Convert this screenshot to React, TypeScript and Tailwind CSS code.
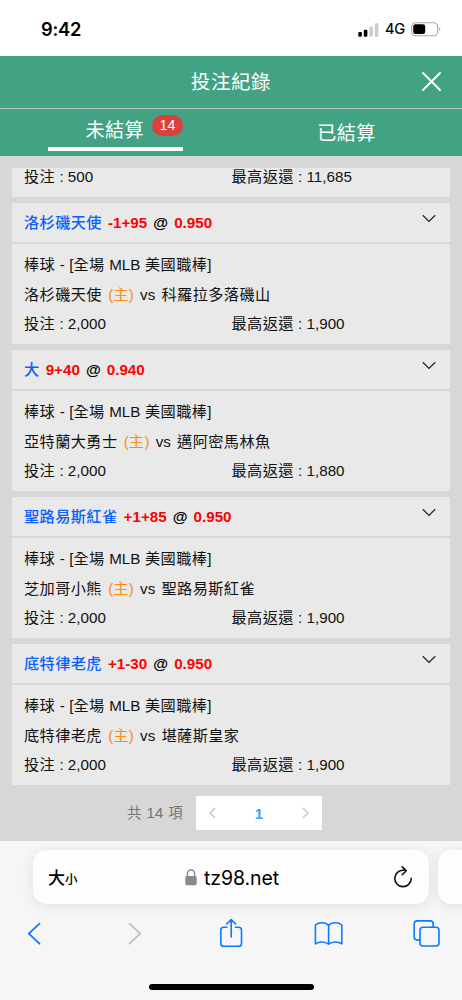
import React from "react";

type Bet = { pick: string; line: string; odds: string; home: string; away: string; win: string };

const bets: Bet[] = [
  { pick: "洛杉磯天使", line: "-1+95", odds: "0.950", home: "洛杉磯天使", away: "科羅拉多落磯山", win: "1,900" },
  { pick: "大", line: "9+40", odds: "0.940", home: "亞特蘭大勇士", away: "邁阿密馬林魚", win: "1,880" },
  { pick: "聖路易斯紅雀", line: "+1+85", odds: "0.950", home: "芝加哥小熊", away: "聖路易斯紅雀", win: "1,900" },
  { pick: "底特律老虎", line: "+1-30", odds: "0.950", home: "底特律老虎", away: "堪薩斯皇家", win: "1,900" },
];

const Han = ({ children }: { children: React.ReactNode }) => (
  <span className="tracking-[0.4px]">{children}</span>
);

function Amounts({ stake, win }: { stake: string; win: string }) {
  return (
    <div className="flex h-[29.6px] items-center">
      <div className="w-[207.5px]"><Han>投注</Han> : {stake}</div>
      <div><Han>最高返還</Han> : {win}</div>
    </div>
  );
}

function BetCard({ bet }: { bet: Bet }) {
  return (
    <section className="mb-[6px] flex h-[141px] flex-col bg-[#e9e9e9]">
      <div className="flex h-[41px] justify-between border-b-2 border-[#d7d7d7] pl-3 pr-[14px]">
        <div className="flex h-[40px] items-center whitespace-pre font-bold text-[#ff0000] [word-spacing:1.8px]">
          <span className="font-medium tracking-[0.4px] text-[#0a60ff]">{bet.pick}</span>
          <span> {bet.line} </span>
          <span className="text-black">@</span>
          <span> {bet.odds}</span>
        </div>
        <svg className="mt-[11px] h-[9px] w-[14px]" viewBox="0 0 14 9" fill="none" stroke="#222" strokeWidth="1.2">
          <path d="M.8 1.3 7 7.4l6.2-6.1" />
        </svg>
      </div>
      <div className="whitespace-pre pl-3 pt-[6px] text-[#111]">
        <div className="flex h-[29.6px] items-center [word-spacing:0.3px]">
          <Han>棒球</Han> - [<Han>全場</Han> MLB <Han>美國職棒</Han>]
        </div>
        <div className="flex h-[29.6px] items-center [word-spacing:2px]">
          <Han>{bet.home}</Han>
          <span className="text-[#ff8c0a]"> (<Han>主</Han>)</span>
          <span> vs </span>
          <Han>{bet.away}</Han>
        </div>
        <Amounts stake="2,000" win={bet.win} />
      </div>
    </section>
  );
}

function StatusBar() {
  return (
    <div className="flex h-[56px] justify-between bg-white pl-[41px] pr-[21px] pt-[16px] font-['Inter','Liberation_Sans',sans-serif] text-black">
      <div className="text-[18.3px] font-semibold leading-[27px] tracking-[-0.2px]">9:42</div>
      <div className="flex h-[27px] items-center">
        <svg className="mr-[6px] h-[14px] w-[21px]" viewBox="0 0 21 14">
          <rect x="0.3" y="9" width="3.6" height="4.8" rx="1" />
          <rect x="5.8" y="6.8" width="3.6" height="7" rx="1" />
          <rect x="11.3" y="3.6" width="3.6" height="10.2" rx="1" fill="#ccc" />
          <rect x="16.8" y="0.3" width="3.6" height="13.5" rx="1" fill="#ccc" />
        </svg>
        <span className="mr-[6px] text-[14.7px] font-normal leading-none tracking-[-0.2px] [-webkit-text-stroke:0.2px_#000]">4G</span>
        <svg className="h-[15px] w-[30px]" viewBox="0 0 30 15">
          <rect x=".6" y=".7" width="26" height="13" rx="4" fill="none" stroke="#a6a6a6" strokeWidth="1.1" />
          <rect x="2.2" y="2.3" width="12" height="9.8" rx="2.3" />
          <path d="M28.2 5.2c1.5.5 1.5 3.6 0 4.1z" fill="#a6a6a6" />
        </svg>
      </div>
    </div>
  );
}

function BrowserBar() {
  return (
    <footer className="h-[159px] overflow-hidden bg-[#f6f6f6] pt-[9px]">
      <div className="flex">
        <div className="ml-[33px] flex h-[54px] w-[396px] shrink-0 items-center rounded-[14px] bg-[#fdfdfd] pl-[15px] pr-[16px] text-black shadow-[0_2px_14px_rgba(0,0,0,0.09)]">
          <div className="flex w-[137px] items-baseline pt-[2px] font-medium">
            <span className="text-[17px]">大</span>
            <span className="text-[12.5px]">小</span>
          </div>
          <svg className="mr-[7px] h-[17px] w-[12px]" viewBox="0 0 12 17">
            <rect x=".3" y="7" width="11.4" height="9.2" rx="1.6" fill="#8a8a8e" />
            <path d="M2.4 8V4.6a3.6 3.6 0 0 1 7.2 0V8" fill="none" stroke="#8a8a8e" strokeWidth="1.4" />
          </svg>
          <span className="flex-1 pt-[3px] font-['Inter','Liberation_Sans',sans-serif] text-[19.5px] tracking-[-0.1px]">tz98.net</span>
          <svg className="h-[23px] w-[20px]" viewBox="0 0 20 23" fill="none" stroke="#111" strokeWidth="1.6" strokeLinecap="round" strokeLinejoin="round">
            <path d="M10.9 4.3A8.2 8.2 0 1 0 18.2 12.4M9.2 .9 13.2 4.7 9.2 8.7" />
          </svg>
        </div>
        <div className="ml-[9px] h-[54px] w-[60px] shrink-0 rounded-[14px] bg-[#fdfdfd] shadow-[0_2px_14px_rgba(0,0,0,0.09)]" />
      </div>
      <svg className="block h-[60px] w-[462px]" viewBox="0 904 462 60" fill="none" stroke="#0a7aff" strokeWidth="1.6" strokeLinecap="round" strokeLinejoin="round">
        <path d="m39.5 923.7-10.7 10 10.7 10" strokeWidth="1.8" />
        <path d="m129.5 923.7 10.7 10-10.7 10" stroke="#bfbfc1" strokeWidth="1.8" />
        <path d="M226.8 927.2h-3.2a2.8 2.8 0 0 0-2.8 2.8v13.4a2.8 2.8 0 0 0 2.8 2.8h15.1a2.8 2.8 0 0 0 2.8-2.8V930a2.8 2.8 0 0 0-2.8-2.8h-3.2M231.2 937v-17.2M226.7 924l4.5-4.4 4.5 4.4" />
        <path d="M328.6 925.4c-3-3.4-10-3.4-13.2-.4v18.9c3.8-2.6 9.6-2.5 13.2.3 3.6-2.8 9.4-2.9 13.2-.3V925c-3.2-3-10.2-3-13.2.4zM328.6 925.4v18.8" />
        <path d="M419.5 940.1h-2.3a3 3 0 0 1-3-3v-13.2a3 3 0 0 1 3-3h13a3 3 0 0 1 3 3v2.9" />
        <rect x="420" y="927.2" width="19" height="18.8" rx="3" />
      </svg>
      <div className="mx-auto mt-[20px] h-[6px] w-[165px] rounded-full bg-black" />
    </footer>
  );
}

export default function App() {
  return (
    <main className="flex h-[1000px] w-[462px] flex-col overflow-hidden bg-[#d7d7d7] font-['Liberation_Sans','Noto_Sans_CJK_TC',sans-serif] text-[15.2px] leading-none">
      <StatusBar />
      <header className="h-[100px] shrink-0 bg-[#41a383] text-white">
        <div className="flex h-[53px] items-center border-b border-[#bcc8c3] pl-[41px] pr-[20px]">
          <h1 className="flex-1 pt-[2px] text-center text-[19.5px] font-normal tracking-[0.6px]">投注紀錄</h1>
          <svg className="mb-[2px] h-[21px] w-[21px]" viewBox="0 0 21 21" stroke="#fff" strokeWidth="2" strokeLinecap="round">
            <path d="m2 2 17 17M19 2 2 19" />
          </svg>
        </div>
        <nav className="flex text-[19.1px] font-normal tracking-[0.4px]">
          <div className="flex w-[231px] justify-center">
            <div className="h-[42px] w-[135px] border-b-4 border-white">
              <div className="flex justify-end">
                <span className="mr-[8px] pt-[12px]">未結算</span>
                <span className="mt-[6px] flex h-[21px] w-[31px] items-center justify-center rounded-full bg-[#da413c] text-[14.3px] tracking-normal">14</span>
              </div>
            </div>
          </div>
          <div className="w-[231px] pt-[15px] text-center">已結算</div>
        </nav>
      </header>
      <div className="h-[685px] px-3 pt-3">
        <section className="mb-[6px] h-[29px] overflow-hidden bg-[#e9e9e9] pl-3 text-[#111]">
          <div className="-mt-[6px] whitespace-pre"><Amounts stake="500" win="11,685" /></div>
        </section>
        {bets.map((bet) => <BetCard key={bet.pick} bet={bet} />)}
        <div className="mt-[11px] flex items-center pl-[115px] text-[15.4px] text-[#737478]">
          <span className="w-[69px] whitespace-nowrap [word-spacing:0.5px]"><span className="text-[14.5px]">共</span> 14 <span className="text-[14.5px]">項</span></span>
          <div className="flex h-[34px] w-[126px] items-center justify-between bg-white px-[13px]">
            <svg className="h-[12px] w-[7px]" viewBox="0 0 7 12" fill="none" stroke="#c4c7cd" strokeWidth="1.4"><path d="M6.2 1 1 6l5.2 5" /></svg>
            <b className="text-[15px] text-[#409eff]">1</b>
            <svg className="h-[12px] w-[7px]" viewBox="0 0 7 12" fill="none" stroke="#c4c7cd" strokeWidth="1.4"><path d="M.8 1 6 6 .8 11" /></svg>
          </div>
        </div>
      </div>
      <BrowserBar />
    </main>
  );
}
